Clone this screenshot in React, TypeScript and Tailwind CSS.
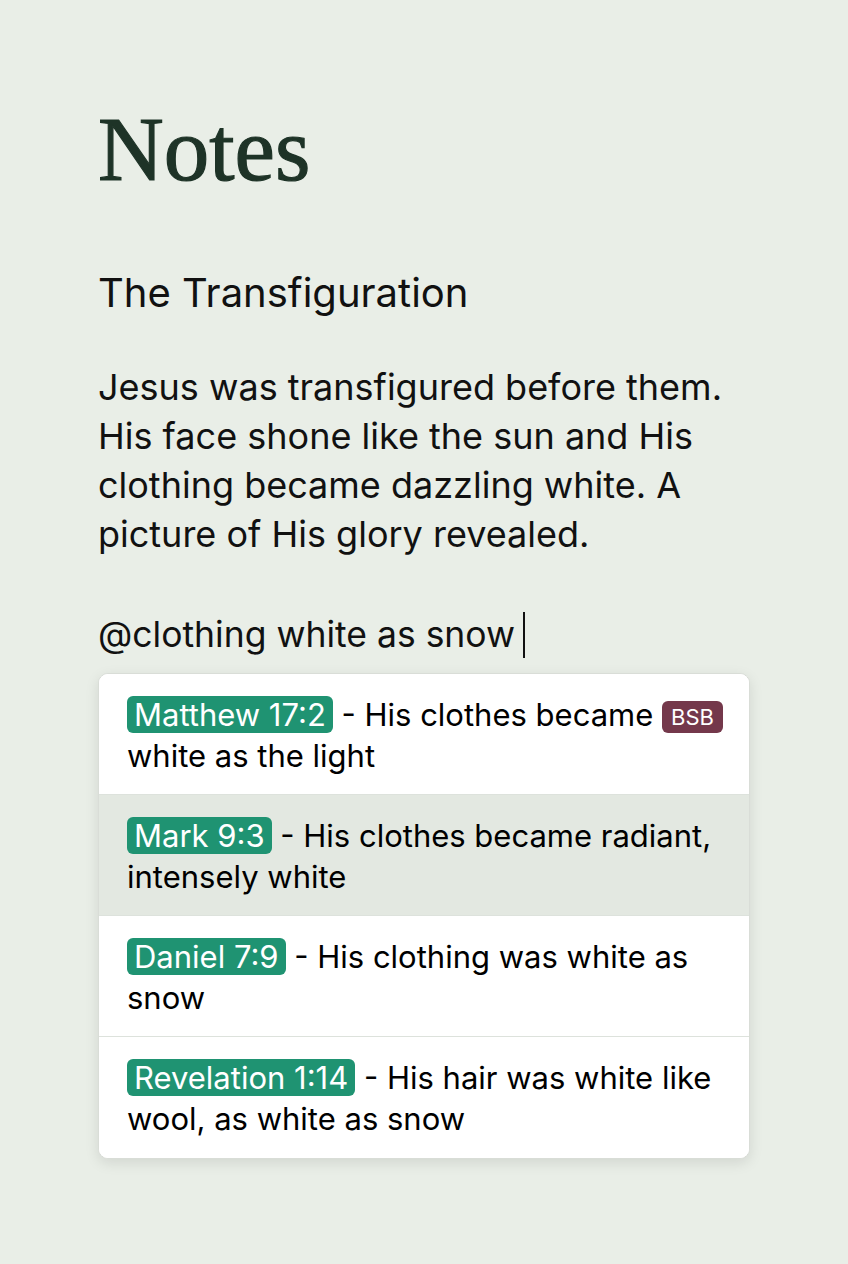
import React from 'react';

type Suggestion = {
  ref: string;
  text: string;
  tag?: string;
  rest?: string;
  active?: boolean;
};

const suggestions: Suggestion[] = [
  { ref: 'Matthew 17:2', text: 'His clothes became', tag: 'BSB', rest: 'white as the light' },
  { ref: 'Mark 9:3', text: 'His clothes became radiant, intensely white', active: true },
  { ref: 'Daniel 7:9', text: 'His clothing was white as snow' },
  { ref: 'Revelation 1:14', text: 'His hair was white like wool, as white as snow' },
];

function SuggestionRow({ item, last }: { item: Suggestion; last: boolean }) {
  return (
    <div
      className={`h-[121px] pl-[28px] pr-5 pt-[20px] text-[31px] leading-[41px] text-black ${
        item.active ? 'bg-[#e3e8e1]' : 'bg-white'
      } ${last ? '' : 'border-b border-[#dde2dc]'}`}>
      <span className="rounded-[6px] bg-[#1f9372] px-[7px] py-[0px] text-white">
        {item.ref}
      </span>{' '}
      - {item.text}
      {item.tag && (
        <>
          {' '}
          <span className="inline-block rounded-[6px] bg-[#74384b] px-[9px] align-[1px] text-[22px] leading-[32px] text-white">
            {item.tag}
          </span>{' '}
          {item.rest}
        </>
      )}
    </div>
  );
}

export default function App() {
  return (
    <div className="min-h-[1264px] w-full bg-[#e9eee7] px-[98px] pt-[104px] font-['Inter',sans-serif]">
      <h1 className="font-['Liberation_Serif',serif] text-[91px] leading-none text-[#1e3327] [-webkit-text-stroke:1.2px_#1e3327]">
        Notes
      </h1>

      <h2 className="mt-[78px] text-[40px] leading-[40px] text-[#111]">
        The Transfiguration
      </h2>

      <p className="mt-[50px] w-[652px] text-[36px] leading-[49px] text-[#111]">
        Jesus was transfigured before them. His face shone like the sun and His clothing became
        dazzling white. A picture of His glory revealed.
      </p>

      <div className="mt-[51px] flex items-center text-[35.5px] leading-[49px] text-[#111]">
        <span>@clothing white as snow</span>
        <span className="ml-[8px] h-[46px] w-[2px] bg-[#111]" />
      </div>

      <div className="mt-[14px] w-[652px] overflow-hidden rounded-[10px] border border-[#d9ddd7] bg-white shadow-[0_4px_14px_rgba(0,0,0,0.10)]">
        {suggestions.map((s, i) => (
          <SuggestionRow key={s.ref} item={s} last={i === suggestions.length - 1} />
        ))}
      </div>
    </div>
  );
}
